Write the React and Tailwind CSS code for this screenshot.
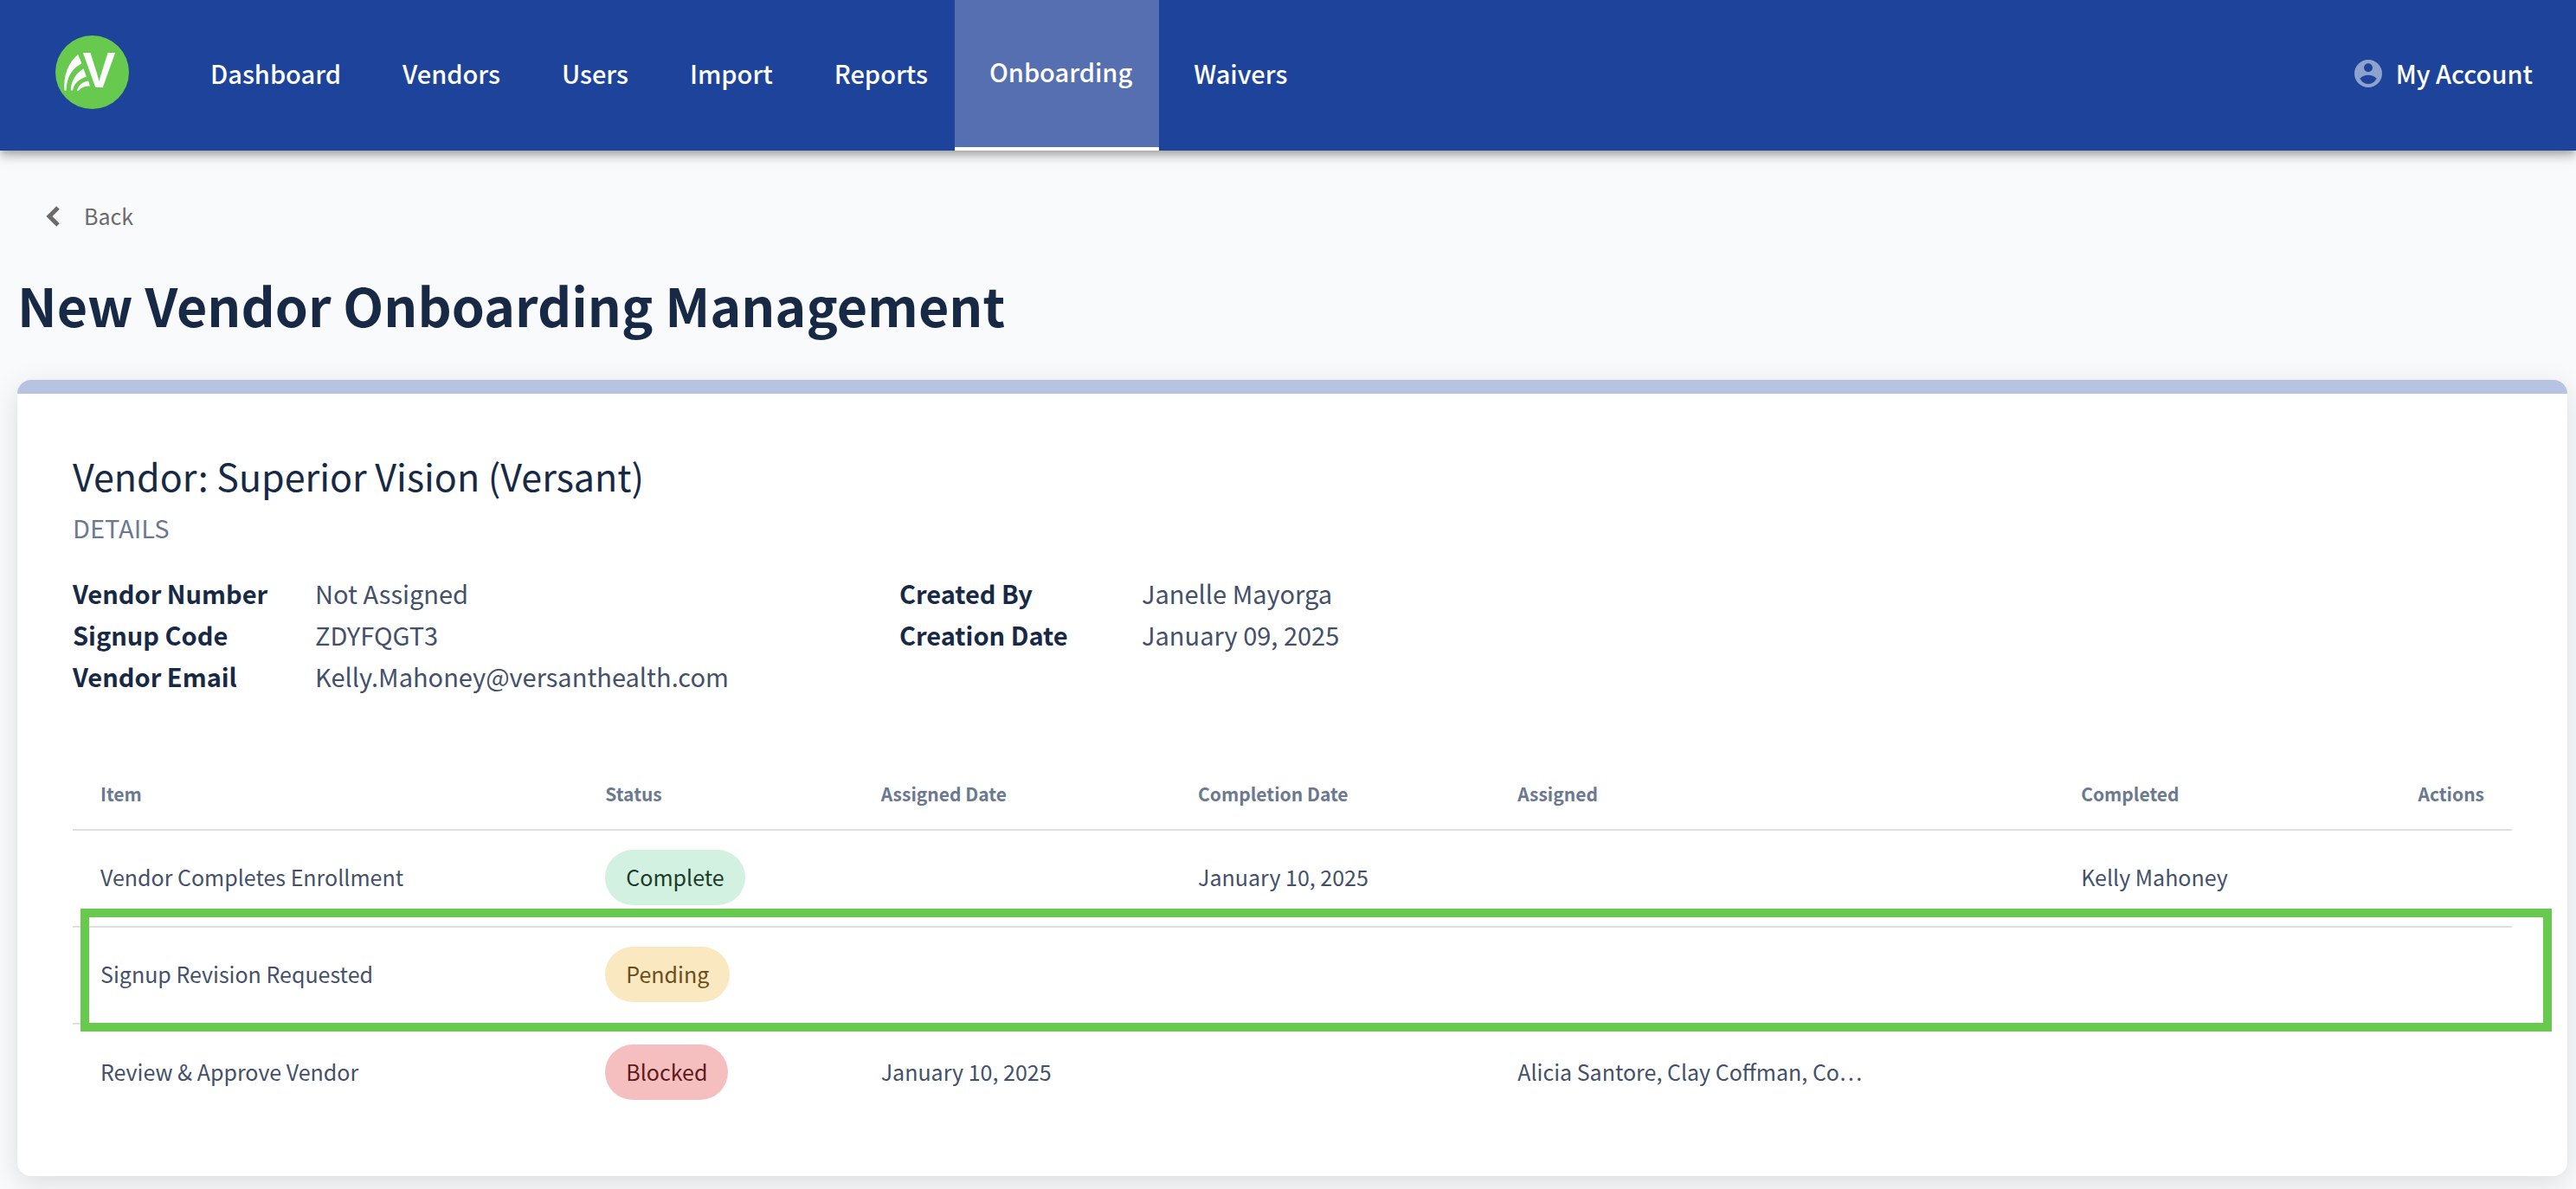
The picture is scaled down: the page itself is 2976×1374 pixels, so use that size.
const NAV_ITEMS = ['Dashboard', 'Vendors', 'Users', 'Import', 'Reports', 'Onboarding', 'Waivers']

const DETAILS_LEFT = [
  ['Vendor Number', 'Not Assigned'],
  ['Signup Code', 'ZDYFQGT3'],
  ['Vendor Email', 'Kelly.Mahoney@versanthealth.com'],
]

const DETAILS_RIGHT = [
  ['Created By', 'Janelle Mayorga'],
  ['Creation Date', 'January 09, 2025'],
]

const ROWS = [
  { item: 'Vendor Completes Enrollment', status: 'Complete', completionDate: 'January 10, 2025', completed: 'Kelly Mahoney' },
  { item: 'Signup Revision Requested', status: 'Pending' },
  { item: 'Review & Approve Vendor', status: 'Blocked', assignedDate: 'January 10, 2025', assigned: 'Alicia Santore, Clay Coffman, Co…' },
]

const STATUS_STYLES = {
  Complete: 'bg-[#d3f1e0] text-[#1c3a29]',
  Pending: 'bg-[#fae8c0] text-[#6b4d1c]',
  Blocked: 'bg-[#f5bfbf] text-[#5f1a1a]',
}

function Logo() {
  return (
    <svg className="size-[85px]" viewBox="70 62 254 254" aria-hidden="true">
      <circle cx="197" cy="189" r="127" fill="#67ca4f" />
      <g fill="#fff">
        <path d="M148 128 L161 158 C128 176 109 202 107 253 L101 252 C97 200 115 155 148 128 Z" />
        <path d="M167 176 L177 205 C152 213 133 228 130 252 L123 251 C124 220 139 194 167 176 Z" />
        <path d="M184 219 L189 237 C170 237 158 242 148 255 L144 252 C151 232 164 222 184 219 Z" />
        <text x="221" y="240" textAnchor="middle" fontFamily="Liberation Sans" fontWeight="700" fontSize="170">V</text>
      </g>
    </svg>
  )
}

function AccountIcon() {
  return (
    <svg className="size-8" viewBox="0 0 96 96" fill="#fff" fillOpacity="0.5" fillRule="evenodd" aria-hidden="true">
      <path d="M48 0a48 48 0 1 0 0 96a48 48 0 1 0 0-96Z M48 13a15 15 0 1 1 0 30a15 15 0 1 1 0-30Z M19 65Q30 53 48 53Q66 53 77 65Q66 84 48 84Q30 84 19 65Z" />
    </svg>
  )
}

function DetailList({ rows }) {
  return (
    <dl className="grid grid-cols-[280px_1fr] content-start text-[29px] leading-[48px]">
      {rows.map(([label, value]) => (
        <div key={label} className="contents">
          <dt className="font-bold text-[#172945]">{label}</dt>
          <dd className="text-[#44506a]">{value}</dd>
        </div>
      ))}
    </dl>
  )
}

export default function App() {
  return (
    <div className="min-h-screen bg-[#f9fafc] font-['Noto_Sans_CJK_SC',sans-serif] text-[#172945]">
      {/* Top bar */}
      <header className="relative flex h-[174px] items-center bg-[#1e439b] pl-16 pr-[50px] text-[29px] font-medium text-white shadow-[0_4px_8px_-2px_rgba(0,0,0,0.2),0_8px_10px_rgba(0,0,0,0.14),0_2px_20px_rgba(0,0,0,0.12)]">
        <a href="#home" aria-label="Home" className="pb-2">
          <Logo />
        </a>
        <nav className="ml-[54px] flex h-full">
          {NAV_ITEMS.map((item) => (
            <a
              key={item}
              href={`#${item.toLowerCase()}`}
              className={
                item === 'Onboarding'
                  ? 'flex items-center border-b-4 border-white bg-[#556fb1] pb-1 pl-10 pr-[31px]'
                  : 'flex items-center pb-1 pl-10 pr-[31px]'
              }
            >
              {item}
            </a>
          ))}
        </nav>
        <button type="button" className="ml-auto flex items-center gap-4 pb-1">
          <AccountIcon />
          My Account
        </button>
      </header>

      <main className="pt-[52px] pb-4 pl-5 pr-[10px]">
        <button type="button" className="ml-8 flex h-12 items-center gap-7 text-[25px] text-[#6b6b6b]">
          <svg className="h-6 w-[17px]" viewBox="0 0 17 24" fill="none" stroke="currentColor" strokeWidth="5" aria-hidden="true">
            <path d="M15 2L5 12L15 22" />
          </svg>
          Back
        </button>

        <h1 className="mt-[38px] text-[61px] leading-[80px] font-bold">New Vendor Onboarding Management</h1>

        <section className="mt-[47px] overflow-hidden rounded-2xl border-t-16 border-[#b7c3e0] bg-white px-16 py-16 shadow-[0_8px_32px_rgba(0,0,0,0.12)]">
          <h2 className="text-[43px] leading-[60px]">Vendor: Superior Vision (Versant)</h2>
          <p className="mt-1.5 text-[29px] leading-[48px] text-[#6b7990]">DETAILS</p>

          <div className="mt-7 grid grid-cols-[955fr_1863fr]">
            <DetailList rows={DETAILS_LEFT} />
            <DetailList rows={DETAILS_RIGHT} />
          </div>

          {/* Onboarding steps */}
          <div className="relative mt-[72px]">
            <table className="w-full table-fixed text-left">
              <thead className="text-[21px] font-bold text-[#6b7990]">
                <tr className="h-[82px] border-b-2 border-[#e0e0e0]">
                  <th className="w-[20.7%] px-8">Item</th>
                  <th className="w-[11.3%] px-8">Status</th>
                  <th className="w-[13%] px-8">Assigned Date</th>
                  <th className="w-[13.1%] px-8">Completion Date</th>
                  <th className="w-[23.1%] px-8">Assigned</th>
                  <th className="px-8">Completed</th>
                  <th className="w-[8%] px-8 text-right">Actions</th>
                </tr>
              </thead>
              <tbody className="text-[25px] text-[#44506a]">
                {ROWS.map((row) => (
                  <tr key={row.item} className="h-[112px] border-b-2 border-[#e0e0e0] last:border-b-0">
                    <td className="px-8 pb-0.5">{row.item}</td>
                    <td className="px-8 pb-0.5">
                      <span className={`inline-flex h-16 items-center rounded-full px-6 align-middle ${STATUS_STYLES[row.status]}`}>
                        {row.status}
                      </span>
                    </td>
                    <td className="px-8 pb-0.5">{row.assignedDate}</td>
                    <td className="px-8 pb-0.5">{row.completionDate}</td>
                    <td className="truncate px-8 pb-0.5">{row.assigned}</td>
                    <td className="px-8 pb-0.5">{row.completed}</td>
                    <td className="px-8 pb-0.5"></td>
                  </tr>
                ))}
              </tbody>
            </table>

            {/* Highlight around the pending step */}
            <div className="pointer-events-none absolute top-[173px] -right-[46px] left-[9px] h-[142px] border-10 border-[#67ca4f]"></div>
          </div>
        </section>
      </main>
    </div>
  )
}
